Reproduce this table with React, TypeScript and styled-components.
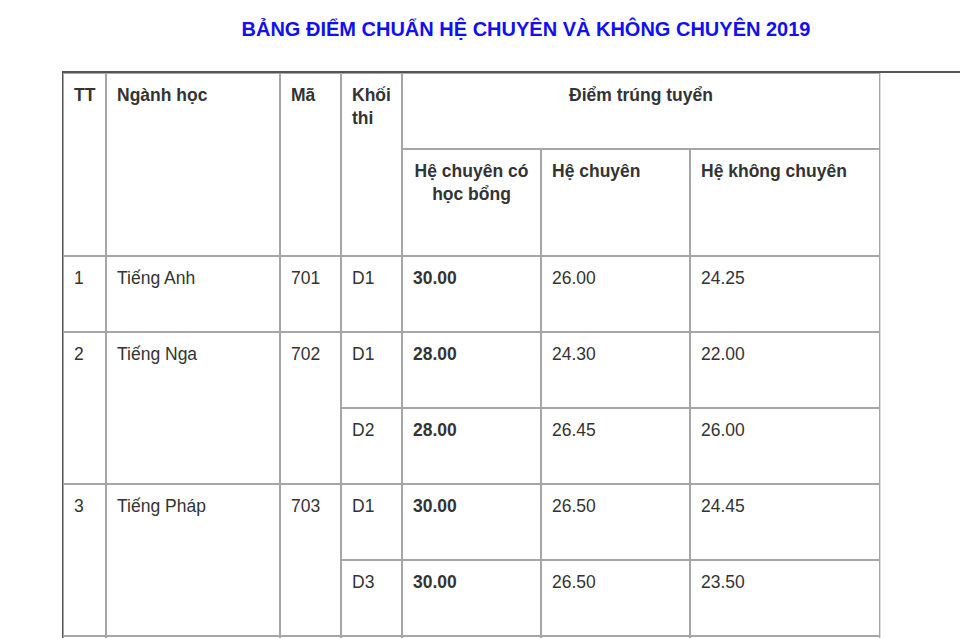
import styled, { createGlobalStyle } from "styled-components";

const GlobalStyle = createGlobalStyle`
  html, body {
    margin: 0;
    padding: 0;
    background: #fff;
    overflow: hidden;
  }
  body {
    font-family: "Liberation Sans", Arial, sans-serif;
    color: #333;
  }
`;

interface IScoreRow {
  tt?: string;
  major?: string;
  code?: string;
  span?: number;
  block: string;
  scholarship: string;
  special: string;
  regular: string;
}

const rows: IScoreRow[] = [
  { tt: "1", major: "Tiếng Anh", code: "701", span: 1, block: "D1", scholarship: "30.00", special: "26.00", regular: "24.25" },
  { tt: "2", major: "Tiếng Nga", code: "702", span: 2, block: "D1", scholarship: "28.00", special: "24.30", regular: "22.00" },
  { block: "D2", scholarship: "28.00", special: "26.45", regular: "26.00" },
  { tt: "3", major: "Tiếng Pháp", code: "703", span: 2, block: "D1", scholarship: "30.00", special: "26.50", regular: "24.45" },
  { block: "D3", scholarship: "30.00", special: "26.50", regular: "23.50" },
  // next row only peeks in at the bottom edge
  { tt: " ", major: "", code: "", span: 1, block: "", scholarship: "", special: "", regular: "" },
];

const colWidths = [43, 174, 61, 61, 139, 149, 190];

function App() {
  return (
    <Page>
      <GlobalStyle />
      <Title>BẢNG ĐIỂM CHUẨN HỆ CHUYÊN VÀ KHÔNG CHUYÊN 2019</Title>
      <TableWrap>
        <Table>
          <colgroup>
            {colWidths.map((w, i) => (
              <Col key={i} $w={w} />
            ))}
          </colgroup>
          <thead>
            <Row $h={76}>
              <Th rowSpan={2}>TT</Th>
              <Th rowSpan={2}>Ngành học</Th>
              <Th rowSpan={2}>Mã</Th>
              <Th rowSpan={2}>Khối thi</Th>
              <Th colSpan={3} $center>
                Điểm trúng tuyển
              </Th>
            </Row>
            <Row $h={107}>
              <Th $center>Hệ chuyên có học bổng</Th>
              <Th>Hệ chuyên</Th>
              <Th>Hệ không chuyên</Th>
            </Row>
          </thead>
          <tbody>
            {rows.map((r, i) => (
              <Row key={i} $h={76}>
                {r.tt && (
                  <>
                    <Td rowSpan={r.span}>{r.tt.trim()}</Td>
                    <Td rowSpan={r.span}>{r.major}</Td>
                    <Td rowSpan={r.span}>{r.code}</Td>
                  </>
                )}
                <Td>{r.block}</Td>
                <Td $bold>{r.scholarship}</Td>
                <Td>{r.special}</Td>
                <Td>{r.regular}</Td>
              </Row>
            ))}
          </tbody>
        </Table>
      </TableWrap>
    </Page>
  );
}

export default App;

const Page = styled.div`
  width: 960px;
  height: 638px;
  overflow: hidden;
`;

const Title = styled.h2`
  margin: 17px 0 0;
  padding-left: 92px;
  text-align: center;
  font-size: 20px;
  line-height: 24px;
  font-weight: 700;
  color: #1010f2;
`;

const TableWrap = styled.div`
  margin: 30px 0 0 62px;
  border-top: 2px solid #555;
  border-left: 1px solid #555;
`;

const Table = styled.table`
  table-layout: fixed;
  width: 817px;
  border-collapse: separate;
  border-spacing: 0;
  border-right: 1px solid #ddd;
`;

const Col = styled.col<{ $w: number }>`
  width: ${(p) => p.$w}px;
`;

const Row = styled.tr<{ $h: number }>`
  height: ${(p) => p.$h}px;
`;

const Th = styled.th<{ $center?: boolean }>`
  box-sizing: border-box;
  border: 1px solid #a6a6a6;
  padding: 10px 10px;
  vertical-align: top;
  text-align: ${(p) => (p.$center ? "center" : "left")};
  font-size: 17.5px;
  line-height: 23px;
  font-weight: 700;
  color: #333;
`;

const Td = styled.td<{ $bold?: boolean }>`
  box-sizing: border-box;
  border: 1px solid #a6a6a6;
  padding: 10px 10px;
  vertical-align: top;
  font-size: 17.5px;
  line-height: 23px;
  font-weight: ${(p) => (p.$bold ? 700 : 400)};
  color: #333;
`;
